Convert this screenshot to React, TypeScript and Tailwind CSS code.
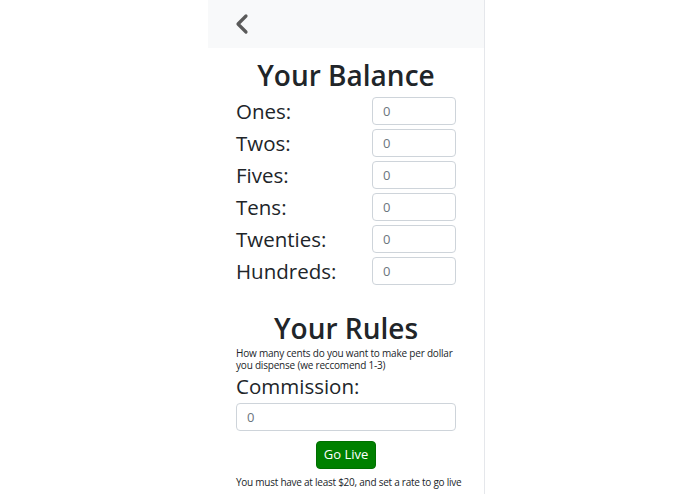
const bills = ["Ones", "Twos", "Fives", "Tens", "Twenties", "Hundreds"];

function BillRow({ label }: { label: string }) {
  return (
    <div className="flex items-center justify-between h-8">
      <span className="text-[20.5px] leading-none font-medium text-[#212529]">{label}:</span>
      <input
        readOnly
        value="0"
        className="w-[84px] h-[28px] rounded border border-[#ced4da] bg-white pl-[10px] text-[13px] text-[#6c757d] outline-none"
      />
    </div>
  );
}

export default function App() {
  return (
    <div
      className="w-full min-h-[494px] bg-white"
      style={{ fontFamily: '"Open Sans", "Noto Sans", sans-serif' }}
    >
      <div className="w-[277px] min-h-[494px] border-r border-[#e5e7eb] ml-[208px]">
        <div className="h-12 bg-[#f8f9fa] flex items-center pl-[26px]">
          <svg width="16" height="22" viewBox="0 0 16 22" fill="none">
            <path d="M12 3 L4 11 L12 19" stroke="#5a5a5a" strokeWidth="3.2" strokeLinecap="round" strokeLinejoin="round" />
          </svg>
        </div>
        <div className="px-[28px]">
          <h1 className="text-center text-[28px] leading-none text-[#212529] mt-[13px] mb-[6px] font-semibold">
            Your Balance
          </h1>
          <div className="flex flex-col">
            {bills.map((b) => (
              <BillRow key={b} label={b} />
            ))}
          </div>
          <h2 className="text-center text-[28px] leading-none text-[#212529] mt-[27px] mb-[5px] font-semibold">
            Your Rules
          </h2>
          <p className="text-[10px] leading-[12px] tracking-[-0.2px] text-[#212529]">
            How many cents do you want to make per dollar you dispense (we reccomend 1-3)
          </p>
          <div className="text-[20.5px] leading-none font-medium text-[#212529] mt-[5px]">Commission:</div>
          <input
            readOnly
            value="0"
            className="mt-[6px] w-full h-[28px] rounded border border-[#ced4da] bg-white pl-[10px] text-[13px] text-[#6c757d] outline-none"
          />
          <div className="flex justify-center mt-[10px]">
            <button className="h-[28px] w-[60px] rounded bg-[#008000] border border-[#006f00] text-white text-[13px]">
              Go Live
            </button>
          </div>
          <p className="mt-[7px] whitespace-nowrap text-[10px] leading-[12px] tracking-[-0.25px] text-[#212529]">
            You must have at least $20, and set a rate to go live
          </p>
        </div>
      </div>
    </div>
  );
}
